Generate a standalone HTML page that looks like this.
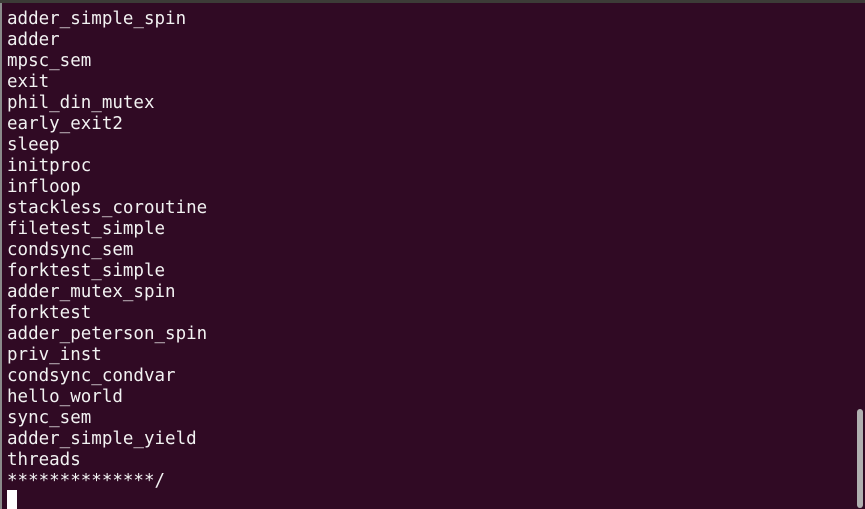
<!DOCTYPE html>
<html><head><meta charset="utf-8"><style>
html,body{margin:0;padding:0}
body{width:865px;height:509px;background:#300a24;position:relative;overflow:hidden}
.top{position:absolute;left:0;top:0;width:865px;height:3px;background:#3c3b37}
.left{position:absolute;left:0;top:3px;width:2px;height:506px;background:#8a8a8a}
pre{position:absolute;left:7px;top:9px;margin:0;font-family:"DejaVu Sans Mono","Liberation Mono",monospace;font-size:17.5px;line-height:21px;color:#f2f2f2}
.cur{position:absolute;left:7px;top:490px;width:10px;height:19px;background:#fff}
.sb{position:absolute;left:857px;top:409px;width:6px;height:99px;background:#b0b0b0;border-radius:3px}
</style></head><body>
<div class="top"></div><div class="left"></div>
<pre>adder_simple_spin
adder
mpsc_sem
exit
phil_din_mutex
early_exit2
sleep
initproc
infloop
stackless_coroutine
filetest_simple
condsync_sem
forktest_simple
adder_mutex_spin
forktest
adder_peterson_spin
priv_inst
condsync_condvar
hello_world
sync_sem
adder_simple_yield
threads
**************/</pre>
<div class="cur"></div>
<div class="sb"></div>
</body></html>
